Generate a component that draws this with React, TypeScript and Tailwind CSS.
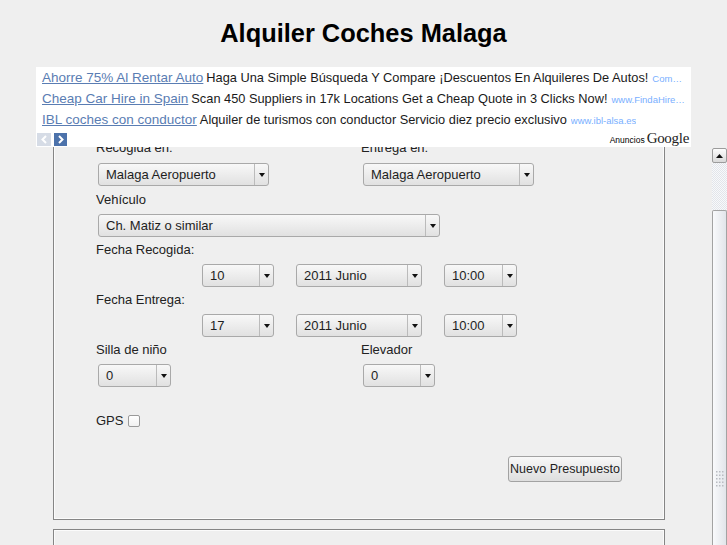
import React from 'react';

const Select = ({ value, w }: { value: string; w: string }) => (
  <div className={`${w} h-[23px] flex items-stretch rounded-[3px] border border-[#a9a9a9] bg-gradient-to-b from-[#f8f8f8] to-[#e1e1e1] text-[13px] text-[#1e1e1e]`}>
    <span className="flex-1 pl-[7px] leading-[21px] whitespace-nowrap overflow-hidden">{value}</span>
    <span className="w-[14px] border-l border-[#bbbbbb] flex items-center justify-center">
      <svg width="6" height="4" viewBox="0 0 6 4">
        <path d="M0 0h6L3 4z" fill="#111" />
      </svg>
    </span>
  </div>
);

const Label = ({ children }: { children: React.ReactNode }) => (
  <div className="h-[15px] leading-[15px] whitespace-nowrap">{children}</div>
);

const ads = [
  {
    link: 'Ahorre 75% Al Rentar Auto',
    text: 'Haga Una Simple Búsqueda Y Compare ¡Descuentos En Alquileres De Autos!',
    url: 'Compare.com/Alquiler',
  },
  {
    link: 'Cheap Car Hire in Spain',
    text: 'Scan 450 Suppliers in 17k Locations Get a Cheap Quote in 3 Clicks Now!',
    url: 'www.FindaHireCar.com',
  },
  {
    link: 'IBL coches con conductor',
    text: 'Alquiler de turismos con conductor Servicio diez precio exclusivo',
    url: 'www.ibl-alsa.es',
  },
];

const Grip = () => (
  <svg width="10" height="17" viewBox="0 0 10 17">
    {[0, 1, 2, 3, 4].map((r) =>
      [0, 1, 2].map((c) => (
        <rect key={`${r}-${c}`} x={1 + c * 3} y={1 + r * 3.5} width="1.5" height="1.5" fill="#b9bcc2" />
      ))
    )}
  </svg>
);

export default function App() {
  return (
    <div className="w-[727px] h-[545px] overflow-hidden bg-[#efefef] font-['Liberation_Sans',Arial,sans-serif] text-[#222]">
      {/* header */}
      <div className="h-[67px] pt-[18px] text-center">
        <h1 className="text-[25.4px] leading-[30px] font-bold text-black">Alquiler Coches Malaga</h1>
      </div>

      {/* ad block */}
      <div className="ml-[36px] w-[655px] h-[80px] bg-white">
        {ads.map((ad) => (
          <div key={ad.link} className="flex items-baseline h-[21px] leading-[21px] pl-[6px] pr-[6px] whitespace-nowrap overflow-hidden">
            <a className="shrink-0 text-[13.5px] text-[#5a7db3] underline">{ad.link}</a>
            <span className="shrink-0 ml-[3px] text-[12.8px] text-[#1a1a1a]">{ad.text}</span>
            <span className="min-w-0 ml-[4px] text-[9.5px] text-[#79afff] overflow-hidden text-ellipsis">{ad.url}</span>
          </div>
        ))}
        <div className="flex items-start justify-between h-[17px] pl-[1px] pr-[2px] pt-[3px]">
          <div className="flex gap-[3px]">
            <span className="w-[14px] h-[13px] bg-[#d6dce6] flex items-center justify-center">
              <svg width="6" height="9" viewBox="0 0 6 9">
                <path d="M5 1L1.5 4.5L5 8" stroke="#fff" strokeWidth="2" fill="none" />
              </svg>
            </span>
            <span className="w-[13px] h-[13px] bg-[#4c72ab] flex items-center justify-center">
              <svg width="6" height="9" viewBox="0 0 6 9">
                <path d="M1 1L4.5 4.5L1 8" stroke="#fff" strokeWidth="2" fill="none" />
              </svg>
            </span>
          </div>
          <div className="flex items-baseline -mt-[3px]">
            <span className="text-[8.5px] text-black">Anuncios</span>
            <span className="ml-[2px] text-[15px] leading-[17px] text-[#222] font-['Liberation_Serif',serif] tracking-[-0.3px]">Google</span>
          </div>
        </div>
      </div>

      {/* scroll area */}
      <div className="flex h-[398px]">
        <div className="flex-1 overflow-hidden">
          <div className="ml-[53px] mt-[-17px] w-[612px] h-[390px] border border-[#858585] shadow-[inset_0_0_0_1px_#fbfbfb] pt-[9px] pl-[42px] text-[13px] text-[#222]">
            <div className="grid grid-cols-[265px_1fr]">
              <div>
                <Label>Recogida en:</Label>
                <div className="mt-[8px] ml-[2px]">
                  <Select value="Malaga Aeropuerto" w="w-[171px]" />
                </div>
              </div>
              <div>
                <Label>Entrega en:</Label>
                <div className="mt-[8px] ml-[2px]">
                  <Select value="Malaga Aeropuerto" w="w-[171px]" />
                </div>
              </div>
            </div>

            <div className="mt-[6px]">
              <Label>Vehículo</Label>
            </div>
            <div className="mt-[7px] ml-[2px]">
              <Select value="Ch. Matiz o similar" w="w-[342px]" />
            </div>

            <div className="mt-[5px]">
              <Label>Fecha Recogida:</Label>
            </div>
            <div className="mt-[7px] ml-[106px] flex gap-[22px]">
              <Select value="10" w="w-[72px]" />
              <Select value="2011 Junio" w="w-[126px]" />
              <Select value="10:00" w="w-[73px]" />
            </div>

            <div className="mt-[5px]">
              <Label>Fecha Entrega:</Label>
            </div>
            <div className="mt-[7px] ml-[106px] flex gap-[22px]">
              <Select value="17" w="w-[72px]" />
              <Select value="2011 Junio" w="w-[126px]" />
              <Select value="10:00" w="w-[73px]" />
            </div>

            <div className="mt-[5px] grid grid-cols-[265px_1fr]">
              <div>
                <Label>Silla de niño</Label>
                <div className="mt-[7px] ml-[2px]">
                  <Select value="0" w="w-[73px]" />
                </div>
              </div>
              <div>
                <Label>Elevador</Label>
                <div className="mt-[7px] ml-[2px]">
                  <Select value="0" w="w-[72px]" />
                </div>
              </div>
            </div>

            <div className="mt-[26px] flex items-center h-[15px]">
              <span>GPS</span>
              <span className="ml-[5px] w-[12px] h-[12px] rounded-[2px] border border-[#9a9a9a] bg-gradient-to-b from-white to-[#f1f1f1]" />
            </div>

            <div className="mt-[28px] flex justify-end pr-[42px]">
              <button className="w-[114px] h-[26px] p-0 whitespace-nowrap rounded-[3px] border border-[#a2a2a2] bg-gradient-to-b from-[#f8f8f8] to-[#dedede] text-[12.5px] text-[#1e1e1e]">
                Nuevo Presupuesto
              </button>
            </div>
          </div>

          <div className="ml-[53px] mt-[9px] w-[612px] h-[100px] border border-[#858585] shadow-[inset_0_0_0_1px_#fbfbfb]" />
        </div>

        {/* scrollbar */}
        <div className="w-[16px] flex flex-col pt-[1px]">
          <div className="ml-[1px] h-[15px] w-[15px] rounded-[2px] border border-[#9c9c9c] bg-gradient-to-b from-[#fdfdfd] to-[#dadada] flex items-center justify-center">
            <svg width="7" height="4" viewBox="0 0 7 4">
              <path d="M3.5 0L7 4H0z" fill="#111" />
            </svg>
          </div>
          <div className="ml-[1px] h-[47px] bg-[repeating-conic-gradient(#e2e5ea_0_25%,#f8f9fb_0_50%)] bg-[length:2px_2px]" />
          <div className="ml-[1px] flex-1 rounded-t-[2px] border border-b-0 border-[#a3a3a3] bg-gradient-to-r from-[#f9fafc] to-[#e2e5ea] flex justify-center pt-[259px]">
            <Grip />
          </div>
        </div>
      </div>
    </div>
  );
}
